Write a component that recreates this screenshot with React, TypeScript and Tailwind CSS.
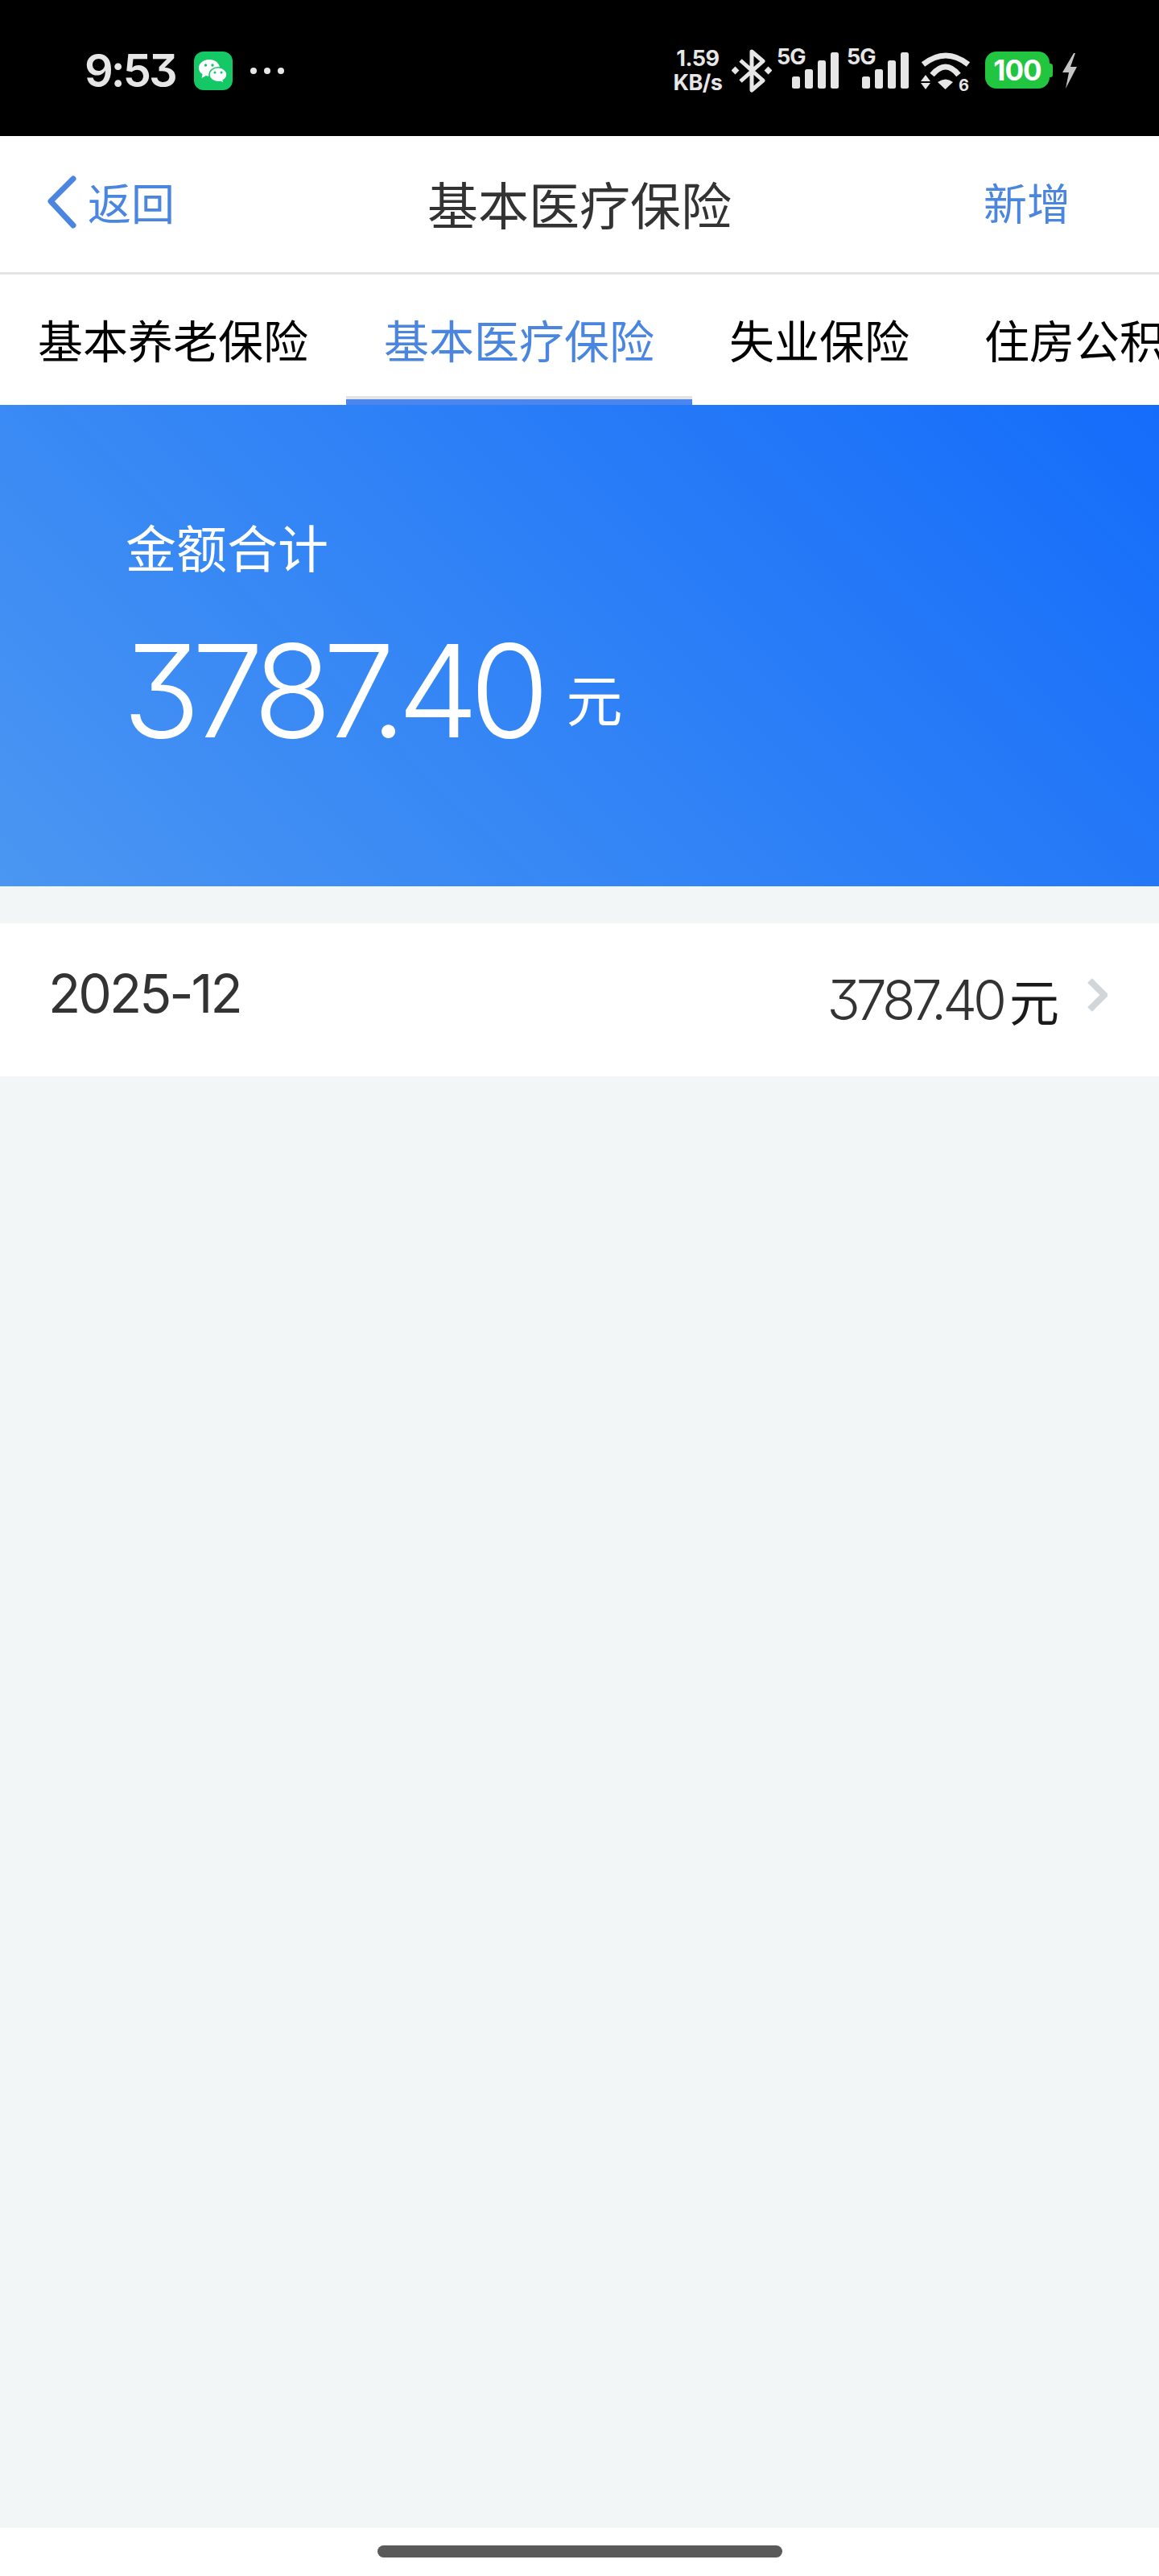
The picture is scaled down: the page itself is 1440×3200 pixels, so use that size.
const cjk = 'font-["Noto_Sans_CJK_SC",sans-serif]'
const digits = 'font-["Inter",sans-serif] [font-feature-settings:"cv09"]'

function SignalBars() {
  return (
    <svg width="77" height="50" viewBox="0 0 77 50" className="shrink-0 overflow-visible">
      <text x="0" y="20" fill="#e6e6e6" fontSize="27" fontWeight="700" letterSpacing="-1" fontFamily="Inter, sans-serif">5G</text>
      <rect x="19" y="35" width="10" height="15" rx="2.500" fill="#e6e6e6" />
      <rect x="35" y="26" width="10" height="24" rx="2.500" fill="#e6e6e6" />
      <rect x="51" y="15" width="10" height="35" rx="2.500" fill="#e6e6e6" />
      <rect x="67" y="5" width="10" height="45" rx="2.500" fill="#e6e6e6" />
    </svg>
  )
}

function StatusBar() {
  return (
    <div className="flex h-[169px] shrink-0 items-start justify-between bg-black pl-[105px] pr-[101px] pt-[60px]">
      <div className="mt-[4px] flex items-center">
        <span className={`${digits} text-[56px] font-semibold leading-[48px] tracking-[-3px] text-[#e6e6e6]`}>9:53</span>
        <div className="ml-[23px] flex h-[48px] w-[48px] items-center justify-center rounded-[12px] bg-[#13c865]">
          <svg width="37" height="31" viewBox="0 0 37 31">
            <path d="M14 1C6.800 1 1 5.600 1 11.400c0 3.200 1.800 6 4.600 7.900L4.500 24l5.400-3c1.300.4 2.700.6 4.100.6 7.200 0 13-4.600 13-10.200S21.200 1 14 1z" fill="#fff" />
            <path d="M25 10.800c-6 0-11 4-11 9s5 9 11 9c1 0 2-.1 3-.4l4 2.300-.8-3.800c2.900-1.700 4.800-4.200 4.800-7.100 0-5-5-9-11-9z" fill="#fff" stroke="#13c865" strokeWidth="1.500" />
            <circle cx="9.500" cy="8" r="1.700" fill="#13c865" />
            <circle cx="18" cy="8" r="1.700" fill="#13c865" />
            <circle cx="21" cy="17" r="1.500" fill="#13c865" />
            <circle cx="29" cy="17" r="1.500" fill="#13c865" />
          </svg>
        </div>
        <div className="ml-[22px] flex items-center gap-[9px]">
          <span className="h-[8px] w-[8px] rounded-full bg-[#e6e6e6]" />
          <span className="h-[8px] w-[8px] rounded-full bg-[#e6e6e6]" />
          <span className="h-[8px] w-[8px] rounded-full bg-[#e6e6e6]" />
        </div>
      </div>
      <div className="flex items-start">
        <div className="-mt-[2px] flex w-[60px] flex-col items-center font-['Inter',sans-serif] text-[27px] font-bold leading-[30px] tracking-[-0.5px] text-[#e6e6e6]">
          <span>1.59</span>
          <span>KB/s</span>
        </div>
        <svg width="50" height="54" viewBox="0 0 50 54" className="ml-[12px] mt-[1px]" fill="none">
          <path d="M11 14l28 25-14 12V3l14 12-28 25" stroke="#e6e6e6" strokeWidth="5" strokeLinejoin="round" />
          <rect x="1" y="23" width="7" height="7" transform="rotate(45 4.500 26.500)" fill="#e6e6e6" />
          <rect x="42" y="23" width="7" height="7" transform="rotate(45 45.500 26.500)" fill="#e6e6e6" />
        </svg>
        <div className="ml-[6px]"><SignalBars /></div>
        <div className="ml-[10px]"><SignalBars /></div>
        <svg width="63" height="52" viewBox="0 0 63 52" className="ml-[15px] mt-[6px] overflow-visible" fill="none">
          <path d="M3 14Q31 -8 59 14" stroke="#e6e6e6" strokeWidth="7" />
          <path d="M14 27Q31 7 47 27" stroke="#e6e6e6" strokeWidth="7" />
          <path d="M21 36Q31 29 40 36L30.500 45z" fill="#e6e6e6" />
          <path d="M6 27l6 8H0zM6 45l6-8H0z" fill="#e6e6e6" />
          <text x="47" y="47" fill="#e6e6e6" fontSize="20" fontWeight="700" fontFamily="Inter, sans-serif">6</text>
        </svg>
        <div className="ml-[17px] mt-[4px] flex items-center">
          <div className="flex h-[46px] w-[80px] items-center justify-center rounded-[14px] bg-[#22c53f] font-['Inter',sans-serif] text-[35px] font-bold tracking-[-1px] text-white">100</div>
          <div className="h-[17px] w-[4px] rounded-r-[3px] bg-[#22c53f]" />
        </div>
        <svg width="20" height="44" viewBox="0 0 20 44" className="ml-[11px] mt-[6px]">
          <path d="M15 0L1 24h8L5 44l14-27h-8l6-17z" fill="#c4c4c4" />
        </svg>
      </div>
    </div>
  )
}

function NavBar() {
  return (
    <div className="flex h-[172px] shrink-0 items-center border-b-[3px] border-[#e2e4e6] bg-white pb-[5px] pl-[56px] pr-[56px]">
      <div className="flex flex-1 items-center text-[#4a86e0]">
        <svg width="42" height="70" viewBox="0 0 42 70" fill="none">
          <path d="M35 6L7 34l28 30" stroke="#4a86e0" strokeWidth="7" strokeLinecap="round" strokeLinejoin="round" />
        </svg>
        <span className="ml-[11px] text-[54px] leading-none">返回</span>
      </div>
      <span className="text-[63px] leading-none text-[#333333]">基本医疗保险</span>
      <div className="flex flex-1 justify-end">
        <span className="mr-[54px] text-[54px] leading-none text-[#4a86e0]">新增</span>
      </div>
    </div>
  )
}

function Tabs() {
  return (
    <div className="flex h-[162px] shrink-0 overflow-hidden bg-white text-[56px] leading-none">
      <div className="flex w-[430px] shrink-0 items-center justify-center pb-[3px] text-black">基本养老保险</div>
      <div className="flex w-[430px] shrink-0 items-center justify-center border-y-[7px] border-t-transparent border-b-[#4a86ee] pb-[3px] text-[#4a86e0] shadow-[inset_0_-4px_0_#e2e4e6]">基本医疗保险</div>
      <div className="flex w-[316px] shrink-0 items-center justify-center pb-[3px] text-black">失业保险</div>
      <div className="flex shrink-0 items-center whitespace-nowrap pb-[3px] pl-[47px] text-black">住房公积金</div>
    </div>
  )
}

function Hero() {
  return (
    <div className="h-[598px] shrink-0 bg-[linear-gradient(45deg,#4a96f2,#146cfa)] pl-[156px] pt-[143px] text-white">
      <div className="text-[63px] leading-none">金额合计</div>
      <div className="mt-[69px] flex items-end">
        <span className={`${digits} -ml-[4px] text-[160px] font-[350] leading-none tracking-[-11px]`}>3787.40</span>
        <span className="mb-[36px] ml-[32px] text-[70px] leading-none">元</span>
      </div>
    </div>
  )
}

function MonthRow() {
  return (
    <div className="mt-[46px] flex h-[190px] shrink-0 items-center justify-between bg-white pl-[60px] pr-[64px]">
      <span className="mb-[16px] font-['Inter',sans-serif] text-[66px] font-normal leading-none tracking-[-3px] text-[#333333]">2025-12</span>
      <div className="flex items-center">
        <span className={`${digits} text-[68px] font-[350] leading-none tracking-[-5px] text-[#333333]`}>3787.40</span>
        <span className="ml-[8px] text-[62px] leading-none text-[#1a1a1a]">元</span>
        <svg width="26" height="44" viewBox="0 0 26 44" fill="none" className="mb-[12px] ml-[34px]">
          <path d="M4 4l18 18L4 40" stroke="#d3d6d9" strokeWidth="8" />
        </svg>
      </div>
    </div>
  )
}

export default function App() {
  return (
    <div className={`flex h-[3200px] w-[1440px] flex-col overflow-hidden bg-[#f2f6f7] ${cjk}`}>
      <StatusBar />
      <NavBar />
      <Tabs />
      <Hero />
      <MonthRow />
      <div className="flex-1" />
      <div className="flex h-[60px] shrink-0 justify-center bg-white pt-[22px]">
        <div className="h-[15px] w-[503px] rounded-full bg-[#5a5a5a]" />
      </div>
    </div>
  )
}
